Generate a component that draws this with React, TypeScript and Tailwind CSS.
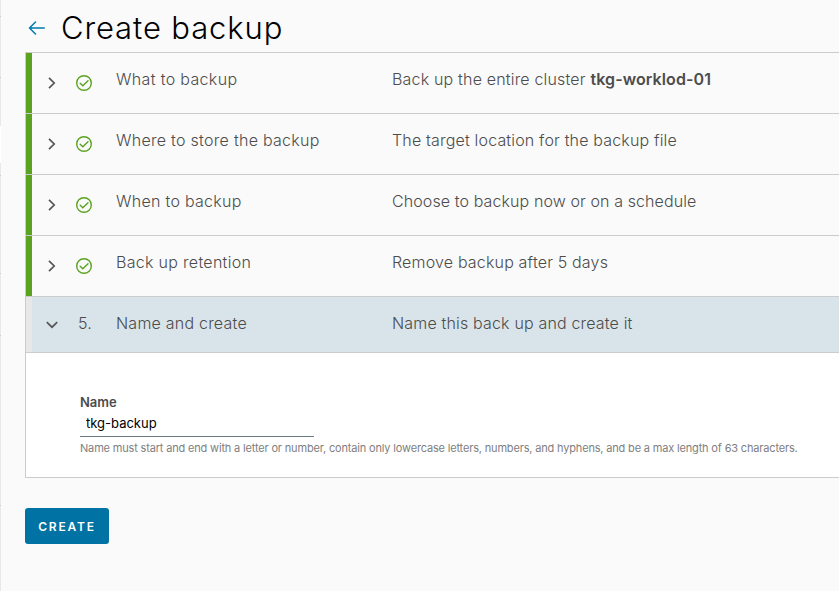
import React from "react";

type Step = { title: string; titleCls: string; desc: React.ReactNode; descCls: string };

const steps: Step[] = [
  {
    title: "What to backup",
    titleCls: "tracking-[0.34px]",
    desc: (
      <>
        Back up the entire cluster <b className="font-semibold tracking-[0.1px]">tkg-worklod-01</b>
      </>
    ),
    descCls: "tracking-[0.18px]",
  },
  { title: "Where to store the backup", titleCls: "tracking-[0.28px]", desc: "The target location for the backup file", descCls: "tracking-[0.17px]" },
  { title: "When to backup", titleCls: "tracking-[0.28px]", desc: "Choose to backup now or on a schedule", descCls: "tracking-[0.1px]" },
  { title: "Back up retention", titleCls: "tracking-[0.3px]", desc: "Remove backup after 5 days", descCls: "tracking-[0.17px]" },
];

function Chevron({ open = false }: { open?: boolean }) {
  return (
    <svg width="12" height="12" viewBox="0 0 12 12" fill="none" stroke="#565656" strokeWidth="1.7" className="shrink-0">
      <path d={open ? "M.8 3.2 6 8.2l5.2-5" : "M3 .9 8.2 6 3 11.1"} />
    </svg>
  );
}

function Check() {
  return (
    <svg width="16" height="16" viewBox="0 0 16 16" fill="none" stroke="#5aa220" strokeWidth="1.4" className="shrink-0">
      <circle cx="8" cy="8" r="7.3" />
      <path d="M4.2 8.2 6.8 10.8l5.2-5" strokeLinecap="round" />
    </svg>
  );
}

function EdgeTicks() {
  return (
    <div className="flex w-px shrink-0 flex-col bg-[#e8e8e8]">
      <div className="mt-4 h-px bg-[#cccccc]" />
      <div className="mt-[60px] h-px bg-[#cccccc]" />
      <div className="mt-[48px] h-[37px] bg-white" />
      <div className="mt-3 h-px bg-[#cccccc]" />
      <div className="mt-[97px] h-px bg-[#cccccc]" />
      <div className="mt-[61px] h-px bg-[#cccccc]" />
      <div className="mt-[169px] h-px bg-[#cccccc]" />
    </div>
  );
}

export default function App() {
  return (
    <div className="flex h-[591px] w-[839px] overflow-hidden bg-[#fafafa] font-['Inter','Liberation_Sans',sans-serif] text-[#4c4c4c]">
      <EdgeTicks />
      <main className="flex min-w-0 flex-1 flex-col pl-6">
        <header className="flex h-[52px] items-start">
          <svg width="17" height="14" viewBox="0 0 17 14" fill="none" stroke="#0079ad" strokeWidth="1.5" strokeLinecap="round" strokeLinejoin="round" className="ml-[3px] mt-[21px] shrink-0">
            <path d="M16.3 7H1.5M7.5 1 1.5 7l6 6" />
          </svg>
          <h1 className="ml-4 mt-2 whitespace-nowrap text-[31px] font-light leading-10 tracking-[0.88px] text-black">Create backup</h1>
        </header>

        <section className="border-l border-t border-[#cccccc]">
          {steps.map((s) => (
            <div key={s.title} className="flex h-[61px] border-b border-[#cccccc] text-base font-light leading-6">
              <div className="w-1.5 shrink-0 bg-[#5aa220]" />
              <div className="ml-[14px] mt-6 shrink-0"><Chevron /></div>
              <div className="ml-[18px] mt-[22px] shrink-0"><Check /></div>
              <div className={"ml-6 mt-[14px] w-[276px] shrink-0 whitespace-nowrap " + s.titleCls}>{s.title}</div>
              <div className={"mt-[14px] whitespace-nowrap " + s.descCls}>{s.desc}</div>
            </div>
          ))}
          <div className="flex h-14 border-b border-[#cccccc] bg-[#d9e4ea] text-base font-light leading-6">
            <div className="w-1.5 shrink-0 bg-[#e8e8e8]" />
            <div className="ml-[14px] mt-[22px] shrink-0"><Chevron open /></div>
            <div className="ml-5 mt-[14px] w-[38px] shrink-0 tracking-[0.3px]">5.</div>
            <div className="mt-[14px] w-[276px] shrink-0 whitespace-nowrap tracking-[0.22px]">Name and create</div>
            <div className="mt-[14px] whitespace-nowrap tracking-[0.17px]">Name this back up and create it</div>
          </div>
          <div className="flex h-[125px] flex-col items-start border-b border-[#cccccc] bg-white pl-[54px] pt-[39px]">
            <label htmlFor="backup-name" className="text-[13px] font-semibold leading-5">Name</label>
            <input id="backup-name" defaultValue="tkg-backup" className="mt-px h-6 w-[234px] border-b border-[#6a7a81] bg-transparent px-1.5 pb-1 text-[13px] leading-5 text-black outline-none" />
            <p className="mt-[3px] whitespace-nowrap text-[11px] leading-4 tracking-[-0.168px] text-[#808080]">
              Name must start and end with a letter or number, contain only lowercase letters, numbers, and hyphens, and be a max length of 63 characters.
            </p>
          </div>
        </section>

        <button className="mt-[30px] h-9 w-[84px] rounded-[3px] bg-[#0072a3] pt-px text-[12px] font-semibold tracking-[1.8px] text-white">CREATE</button>
      </main>
    </div>
  );
}
